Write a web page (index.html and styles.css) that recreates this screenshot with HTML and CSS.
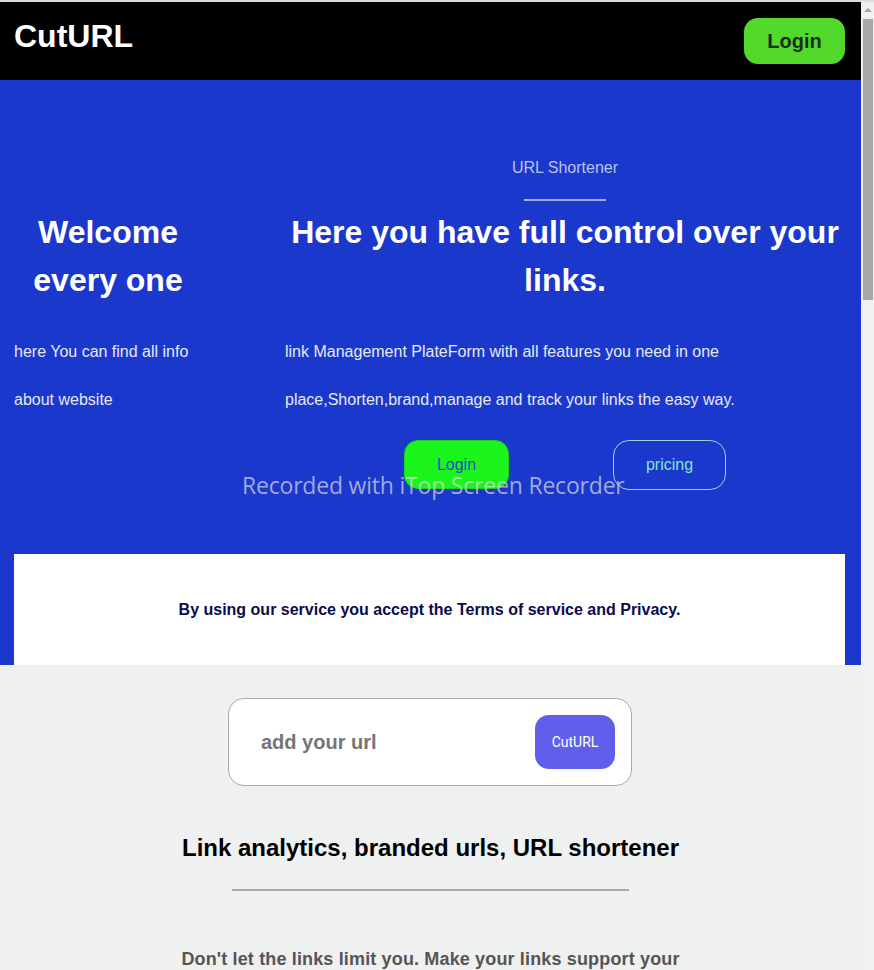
FILE: index.html
```html
<!DOCTYPE html>
<html lang="en">
<head>
<meta charset="utf-8">
<title>CutURL</title>
<link rel="stylesheet" href="styles.css">
</head>
<body>
<div class="topline"></div>
<div class="frame">
  <div class="page">
    <header class="header">
      <h1 class="logo">CutURL</h1>
      <button class="btn-header">Login</button>
    </header>

    <section class="hero">
      <div class="hero-cols">
        <div class="col-left">
          <h2 class="hero-title">Welcome every one</h2>
          <p class="hero-text">here You can find all info</p>
          <p class="hero-text">about website</p>
        </div>
        <div class="col-right">
          <p class="kicker">URL Shortener</p>
          <div class="kicker-line"></div>
          <h2 class="hero-title center">Here you have full control over your links.</h2>
          <p class="hero-text">link Management PlateForm with all features you need in one place,Shorten,brand,manage and track your links the easy way.</p>
          <div class="hero-actions">
            <button class="btn-green">Login</button>
            <button class="btn-outline">pricing</button>
          </div>
        </div>
      </div>
      <div class="terms">
        <p>By using our service you accept the Terms of service and Privacy.</p>
      </div>
      <div class="watermark">Recorded with iTop Screen Recorder</div>
    </section>

    <section class="shorten">
      <div class="url-box">
        <span class="url-placeholder">add your url</span>
        <button class="btn-cut">CutURL</button>
      </div>
      <h3 class="sub-title">Link analytics, branded urls, URL shortener</h3>
      <div class="sub-line"></div>
      <p class="sub-text">Don't let the links limit you. Make your links support your</p>
    </section>
  </div>
  <div class="scrollbar">
    <div class="sb-arrow"></div>
    <div class="sb-thumb"></div>
  </div>
</div>
</body>
</html>
```

FILE: styles.css
```css
* { box-sizing: border-box; }
html, body {
  margin: 0;
  padding: 0;
  height: 970px;
  overflow: hidden;
  font-family: "Liberation Sans", Arial, sans-serif;
}
.topline {
  height: 2px;
  background: #dcdcdc;
}
.frame {
  display: flex;
  height: 968px;
}
.page {
  width: 861px;
  flex: none;
  background: #eff0f0;
  overflow: hidden;
}
.header {
  height: 78px;
  background: #000;
  display: flex;
  justify-content: space-between;
  align-items: flex-start;
  padding: 16px 16px 0 14px;
}
.logo {
  margin: 0;
  color: #fff;
  font-size: 32px;
  line-height: 37px;
  font-weight: bold;
}
.btn-header {
  width: 101px;
  height: 46px;
  border: none;
  border-radius: 14px;
  background: #52d92b;
  color: #12301a;
  font-family: "Liberation Sans", Arial, sans-serif;
  font-weight: bold;
  font-size: 20px;
  padding: 0;
}
.hero {
  position: relative;
  background: #1b38cd;
  padding: 78px 16px 0 14px;
}
.hero-cols {
  display: flex;
  align-items: flex-start;
}
.col-left {
  width: 188px;
  padding-top: 50px;
  flex: none;
}
.col-right {
  width: 560px;
  margin-left: 83px;
  flex: none;
}
.hero-title {
  margin: 0;
  color: #fff;
  font-size: 32px;
  line-height: 48px;
  font-weight: bold;
  text-align: center;
}
.hero-text {
  margin: 24px 0 0;
  color: #e6e8fa;
  font-size: 16px;
  line-height: 48px;
}
.hero-text + .hero-text { margin-top: 0; }
.kicker {
  margin: 0;
  text-align: center;
  color: #b9c3f0;
  font-size: 16px;
  line-height: 18px;
  padding-top: 1px;
}
.kicker-line {
  width: 82px;
  height: 2px;
  background: #9fb0ea;
  margin: 22px auto 7px;
}
.hero-actions {
  display: flex;
  gap: 104px;
  padding-left: 119px;
  margin-top: 16px;
}
.btn-green {
  width: 105px;
  height: 49px;
  border: 1px solid #17d417;
  border-radius: 14px;
  background: #1cf51c;
  color: #2948c8;
  font-family: "Liberation Sans", Arial, sans-serif;
  font-size: 16px;
  padding: 0;
}
.btn-outline {
  width: 113px;
  height: 50px;
  border: 1px solid #93d6e0;
  border-radius: 16px;
  background: transparent;
  color: #80e8c8;
  font-family: "Liberation Sans", Arial, sans-serif;
  font-size: 16px;
  padding: 0;
}
.terms {
  margin-top: 64px;
  height: 111px;
  background: #fff;
  display: flex;
  align-items: center;
  justify-content: center;
}
.terms p {
  margin: 0;
  color: #0b0b4d;
  font-size: 16px;
  font-weight: bold;
}
.watermark {
  position: absolute;
  left: 242px;
  top: 389px;
  color: rgba(215, 215, 225, 0.72);
  font-family: "Open Sans", "Noto Sans", sans-serif;
  font-size: 23px;
  line-height: 32px;
  letter-spacing: -0.2px;
  white-space: nowrap;
}
.shorten {
  display: flex;
  flex-direction: column;
  align-items: center;
  padding-top: 33px;
}
.url-box {
  width: 404px;
  height: 88px;
  background: #fff;
  border: 1px solid #aaa;
  border-radius: 16px;
  display: flex;
  align-items: center;
  justify-content: space-between;
  padding: 0 16px 0 32px;
  margin-left: -1px;
}
.url-placeholder {
  color: #757575;
  font-size: 20px;
  font-weight: bold;
}
.btn-cut {
  width: 80px;
  height: 54px;
  border: none;
  border-radius: 14px;
  background: #5f5fec;
  color: #fff;
  font-family: Roboto, "Liberation Sans", sans-serif;
  font-size: 14px;
  padding: 0;
}
.sub-title {
  margin: 48px 0 0;
  font-size: 24px;
  line-height: 28px;
  font-weight: bold;
  color: #000;
}
.sub-line {
  width: 397px;
  height: 2px;
  background: #aaa;
  margin-top: 27px;
}
.sub-text {
  margin: 58px 0 0;
  color: #555;
  font-size: 18px;
  font-weight: bold;
  letter-spacing: 0.15px;
}
.scrollbar {
  width: 13px;
  flex: none;
  background: #f1f1f1;
  display: flex;
  flex-direction: column;
  align-items: center;
}
.sb-arrow {
  margin-top: 6px;
  width: 0;
  height: 0;
  border-left: 4px solid transparent;
  border-right: 4px solid transparent;
  border-bottom: 4px solid #a3a3a3;
}
.sb-thumb {
  margin-top: 7px;
  width: 10px;
  height: 281px;
  background: #a8a8a8;
  margin-left: 1px;
}
```
